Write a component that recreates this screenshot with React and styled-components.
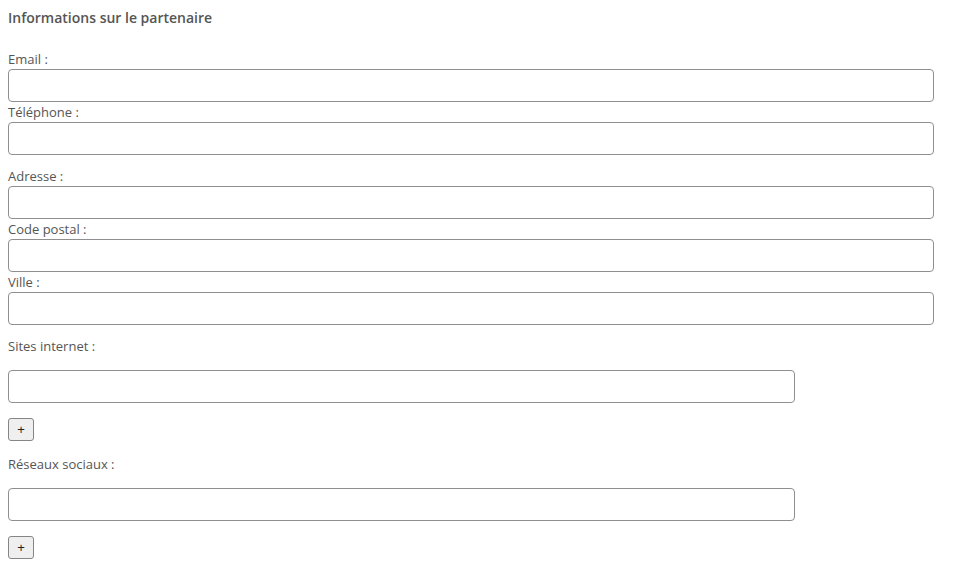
import React from 'react'
import styled, { createGlobalStyle } from 'styled-components'

const GlobalStyle = createGlobalStyle`
    body {
        margin: 0;
        background: #ffffff;
        font-family: "Open Sans", "Noto Sans", sans-serif;
        color: #555555;
    }
`

const Form = styled.div`
    display: flex;
    flex-direction: column;
    padding: 8px 36px 0 8px;
    width: 970px;
    box-sizing: border-box;
`

const Title = styled.h3`
    margin: 0 0 21px 0;
    height: 20px;
    line-height: 20px;
    font-size: 14px;
    font-weight: 600;
    color: #555555;
`

const Group = styled.div`
    display: flex;
    flex-direction: column;
    margin-top: ${props => props.$gap || 0}px;
`

const Label = styled.label`
    display: block;
    height: 20px;
    line-height: 20px;
    font-size: 13px;
    color: #555555;
    margin-bottom: ${props => props.$spaced ? 14 : 0}px;
`

const Input = styled.input`
    box-sizing: border-box;
    height: 33px;
    width: ${props => props.$short ? '787px' : '100%'};
    border: 1px solid #8f8f8f;
    border-radius: 4px;
    background: #ffffff;
    padding: 0 8px;
    font-family: inherit;
    font-size: 13px;
    outline: none;
`

const AddButton = styled.button`
    box-sizing: border-box;
    width: 26px;
    height: 23px;
    margin-top: 15px;
    padding: 0;
    border: 1px solid #858585;
    border-radius: 3px;
    background: #efefef;
    color: #222222;
    font-family: "Liberation Sans", sans-serif;
    font-size: 13px;
    line-height: 21px;
    text-align: center;
`

const fields = [
    { label: 'Email :', gap: 0 },
    { label: 'Téléphone :', gap: 0 },
    { label: 'Adresse :', gap: 11 },
    { label: 'Code postal :', gap: 0 },
    { label: 'Ville :', gap: 0 },
]

const lists = [
    { label: 'Sites internet :', gap: 11 },
    { label: 'Réseaux sociaux :', gap: 13 },
]

function App() {
    return (
        <>
            <GlobalStyle />
            <Form>
                <Title>Informations sur le partenaire</Title>
                {fields.map(f => (
                    <Group key={f.label} $gap={f.gap}>
                        <Label>{f.label}</Label>
                        <Input type="text" />
                    </Group>
                ))}
                {lists.map(l => (
                    <Group key={l.label} $gap={l.gap}>
                        <Label $spaced>{l.label}</Label>
                        <Input type="text" $short />
                        <AddButton type="button">+</AddButton>
                    </Group>
                ))}
            </Form>
        </>
    )
}

export default App
